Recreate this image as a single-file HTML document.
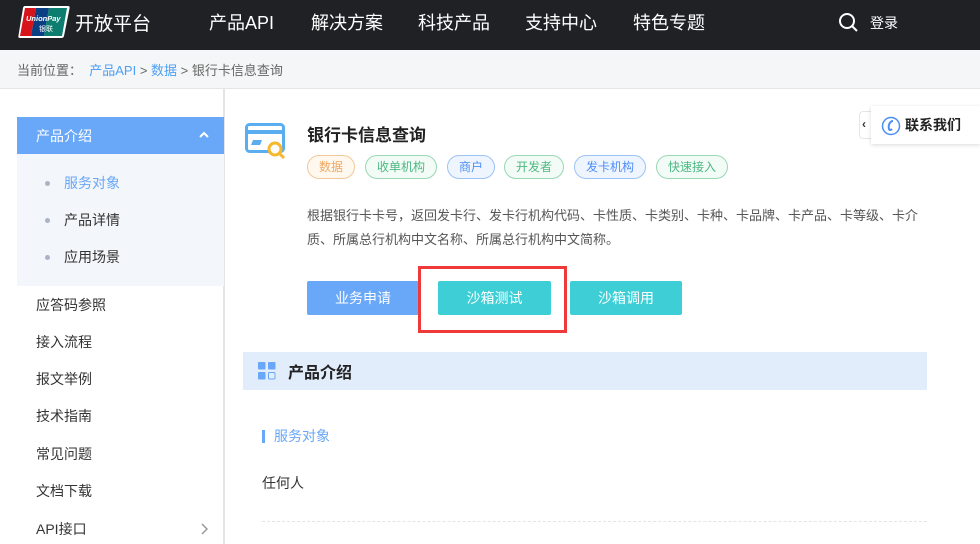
<!DOCTYPE html>
<html><head><meta charset="utf-8"><style>
*{margin:0;padding:0;box-sizing:border-box}
body{width:980px;height:544px;overflow:hidden;background:#fff;font-family:"Liberation Sans","Noto Sans CJK SC",sans-serif;position:relative;color:#333}
.top{position:absolute;left:0;top:0;width:980px;height:50px;background:#1f2125}
.nav{position:absolute;top:9px;color:#fff;font-size:18px}
.bc{position:absolute;top:50px;left:0;width:980px;height:39px;background:#f5f6f7;border-bottom:1px solid #e6e6e6;font-size:13px;color:#666;padding:10px 0 0 17px}
.bc a{color:#4da0f5}
.side{position:absolute;left:0;top:89px;width:225px;height:455px;border-right:2px solid #e4e4e4}
.act{position:absolute;left:17px;top:28px;width:207px;height:37px;background:#69a7f8;color:#fff;font-size:14px;padding:9px 0 0 19px}
.sub{position:absolute;left:17px;top:65px;width:207px;height:132px;background:#f3f6fa}
.si{position:absolute;left:64px;font-size:14px;color:#333}
.si:before{content:"";position:absolute;left:-19px;top:8px;width:5px;height:5px;border-radius:50%;background:#aab4c4}
.mi{position:absolute;left:36px;font-size:14px;color:#333}
.tag{position:absolute;top:155px;height:24px;border-radius:12px;font-size:12px;padding-top:2px;text-align:center;border:1px solid}
.btn{position:absolute;top:281px;height:34px;border-radius:2px;color:#fff;font-size:14px;text-align:center;padding-top:7px}
</style></head><body>
<div class="top">
<svg style="position:absolute;left:17px;top:5px" width="54" height="34" viewBox="0 0 54 34"><path d="M7 1h44q2 0 1.6 2L47 31q-.5 2-2.5 2H3q-2 0-1.6-2L6 3q.4-2 2-2z" fill="#fff"/><path d="M8 3h11l-5 28H3z" fill="#d7141a"/><path d="M19 3h13l-5 28H14z" fill="#0a3f84"/><path d="M32 3h18l-5 28H27z" fill="#0c7d6f"/><text x="9" y="16" font-size="7.5" fill="#fff" font-style="italic" font-weight="bold" font-family="Liberation Sans">UnionPay</text><text x="22" y="26" font-size="7" fill="#fff" font-family="Noto Sans CJK SC">银联</text></svg>
<div class="nav" style="left:75px;font-size:19px">开放平台</div>
<div class="nav" style="left:209px">产品API</div>
<div class="nav" style="left:311px">解决方案</div>
<div class="nav" style="left:418px">科技产品</div>
<div class="nav" style="left:525px">支持中心</div>
<div class="nav" style="left:633px">特色专题</div>
<svg style="position:absolute;left:838px;top:12px" width="22" height="22" viewBox="0 0 22 22"><circle cx="9" cy="9" r="7" fill="none" stroke="#fff" stroke-width="2"/><path d="M14 14l5 5" stroke="#fff" stroke-width="2"/></svg>
<div class="nav" style="left:870px;top:13px;font-size:14px">登录</div>
</div>
<div class="bc">当前位置：&nbsp; <a>产品API</a> &gt; <a>数据</a> &gt; 银行卡信息查询</div>
<div class="side">
<div class="act">产品介绍<svg style="position:absolute;left:182px;top:14px" width="10" height="7" viewBox="0 0 10 7"><path d="M1 6l4-4 4 4" stroke="#fff" stroke-width="2" fill="none"/></svg></div>
<div class="sub"></div>
<div class="si" style="top:84px;color:#69a7f8">服务对象</div>
<div class="si" style="top:121px">产品详情</div>
<div class="si" style="top:158px">应用场景</div>
<div class="mi" style="top:206px">应答码参照</div>
<div class="mi" style="top:243px">接入流程</div>
<div class="mi" style="top:280px">报文举例</div>
<div class="mi" style="top:317px">技术指南</div>
<div class="mi" style="top:355px">常见问题</div>
<div class="mi" style="top:392px">文档下载</div>
<div class="mi" style="top:430px">API接口</div>
<svg style="position:absolute;left:201px;top:434px" width="7" height="12" viewBox="0 0 7 12"><path d="M1 1l5 5-5 5" stroke="#999" stroke-width="1.5" fill="none"/></svg>
</div>
<svg style="position:absolute;left:245px;top:123px" width="42" height="36" viewBox="0 0 42 36"><rect x="1.5" y="1.5" width="37" height="27" rx="3" fill="none" stroke="#5aaef0" stroke-width="3"/><path d="M2 9h36" stroke="#5aaef0" stroke-width="4"/><path d="M8 17h9l-2 5H6z" fill="#5aaef0"/><circle cx="30" cy="26" r="6" fill="#fff" stroke="#f5b82e" stroke-width="3"/><path d="M34 30l5 5" stroke="#f5b82e" stroke-width="3"/></svg>
<div style="position:absolute;left:307px;top:121px;font-size:17px;font-weight:bold;color:#222">银行卡信息查询</div>
<div class="tag" style="left:307px;width:48px;color:#f0a860;border-color:#f3c89a;background:#fff8ef">数据</div>
<div class="tag" style="left:365px;width:72px;color:#4cb882;border-color:#98d8b4;background:#f2fbf6">收单机构</div>
<div class="tag" style="left:447px;width:48px;color:#4d8ef5;border-color:#9dc2f8;background:#eef5ff">商户</div>
<div class="tag" style="left:504px;width:60px;color:#4cb882;border-color:#98d8b4;background:#f2fbf6">开发者</div>
<div class="tag" style="left:574px;width:72px;color:#4d8ef5;border-color:#9dc2f8;background:#eef5ff">发卡机构</div>
<div class="tag" style="left:656px;width:72px;color:#4cb882;border-color:#98d8b4;background:#f2fbf6">快速接入</div>
<div style="position:absolute;left:307px;top:204px;width:625px;font-size:13px;line-height:24px;color:#555">根据银行卡卡号，返回发卡行、发卡行机构代码、卡性质、卡类别、卡种、卡品牌、卡产品、卡等级、卡介质、所属总行机构中文名称、所属总行机构中文简称。</div>
<div class="btn" style="left:307px;width:112px;background:#69a7f8">业务申请</div>
<div class="btn" style="left:438px;width:113px;background:#3ecfd6">沙箱测试</div>
<div class="btn" style="left:570px;width:112px;background:#3ecfd6">沙箱调用</div>
<div style="position:absolute;left:418px;top:266px;width:149px;height:67px;border:3px solid #f03a3a"></div>
<div style="position:absolute;left:243px;top:352px;width:684px;height:38px;background:#e2edfc"></div>
<svg style="position:absolute;left:258px;top:362px" width="18" height="18" viewBox="0 0 18 18"><rect x="0" y="0" width="7.5" height="7.5" rx="1" fill="#69a7f8"/><rect x="10" y="0" width="7.5" height="7.5" rx="1" fill="#69a7f8"/><rect x="0" y="10" width="7.5" height="7.5" rx="1" fill="#69a7f8"/><rect x="10.5" y="10.5" width="6.5" height="6.5" rx="1" fill="none" stroke="#69a7f8"/></svg>
<div style="position:absolute;left:288px;top:359px;font-size:16px;font-weight:bold;color:#222">产品介绍</div>
<div style="position:absolute;left:262px;top:430px;width:3px;height:13px;background:#69a7f8"></div>
<div style="position:absolute;left:274px;top:426px;font-size:14px;color:#69a7f8">服务对象</div>
<div style="position:absolute;left:262px;top:473px;font-size:14px;color:#333">任何人</div>
<div style="position:absolute;left:262px;top:521px;width:665px;border-top:1px dashed #e4e4e4"></div>
<div style="position:absolute;left:859px;top:111px;width:16px;height:28px;border:1px solid #e6e6e6;border-right:none;border-radius:4px 0 0 4px;background:#fff;font-size:12px;font-weight:bold;padding:5px 0 0 2px">‹</div>
<div style="position:absolute;left:871px;top:106px;width:109px;height:38px;background:#fff;box-shadow:0 1px 4px rgba(0,0,0,.15)"></div>
<svg style="position:absolute;left:881px;top:116px" width="20" height="20" viewBox="0 0 20 20"><circle cx="10" cy="10" r="8.5" fill="none" stroke="#4d8ef5" stroke-width="1.5"/><path d="M12 5c-3 0-5 4-4 8 .5 1.5 2 1 3 0" stroke="#4d8ef5" stroke-width="2" fill="none"/></svg>
<div style="position:absolute;left:905px;top:115px;font-size:14px;font-weight:bold;color:#222">联系我们</div>
</body></html>
